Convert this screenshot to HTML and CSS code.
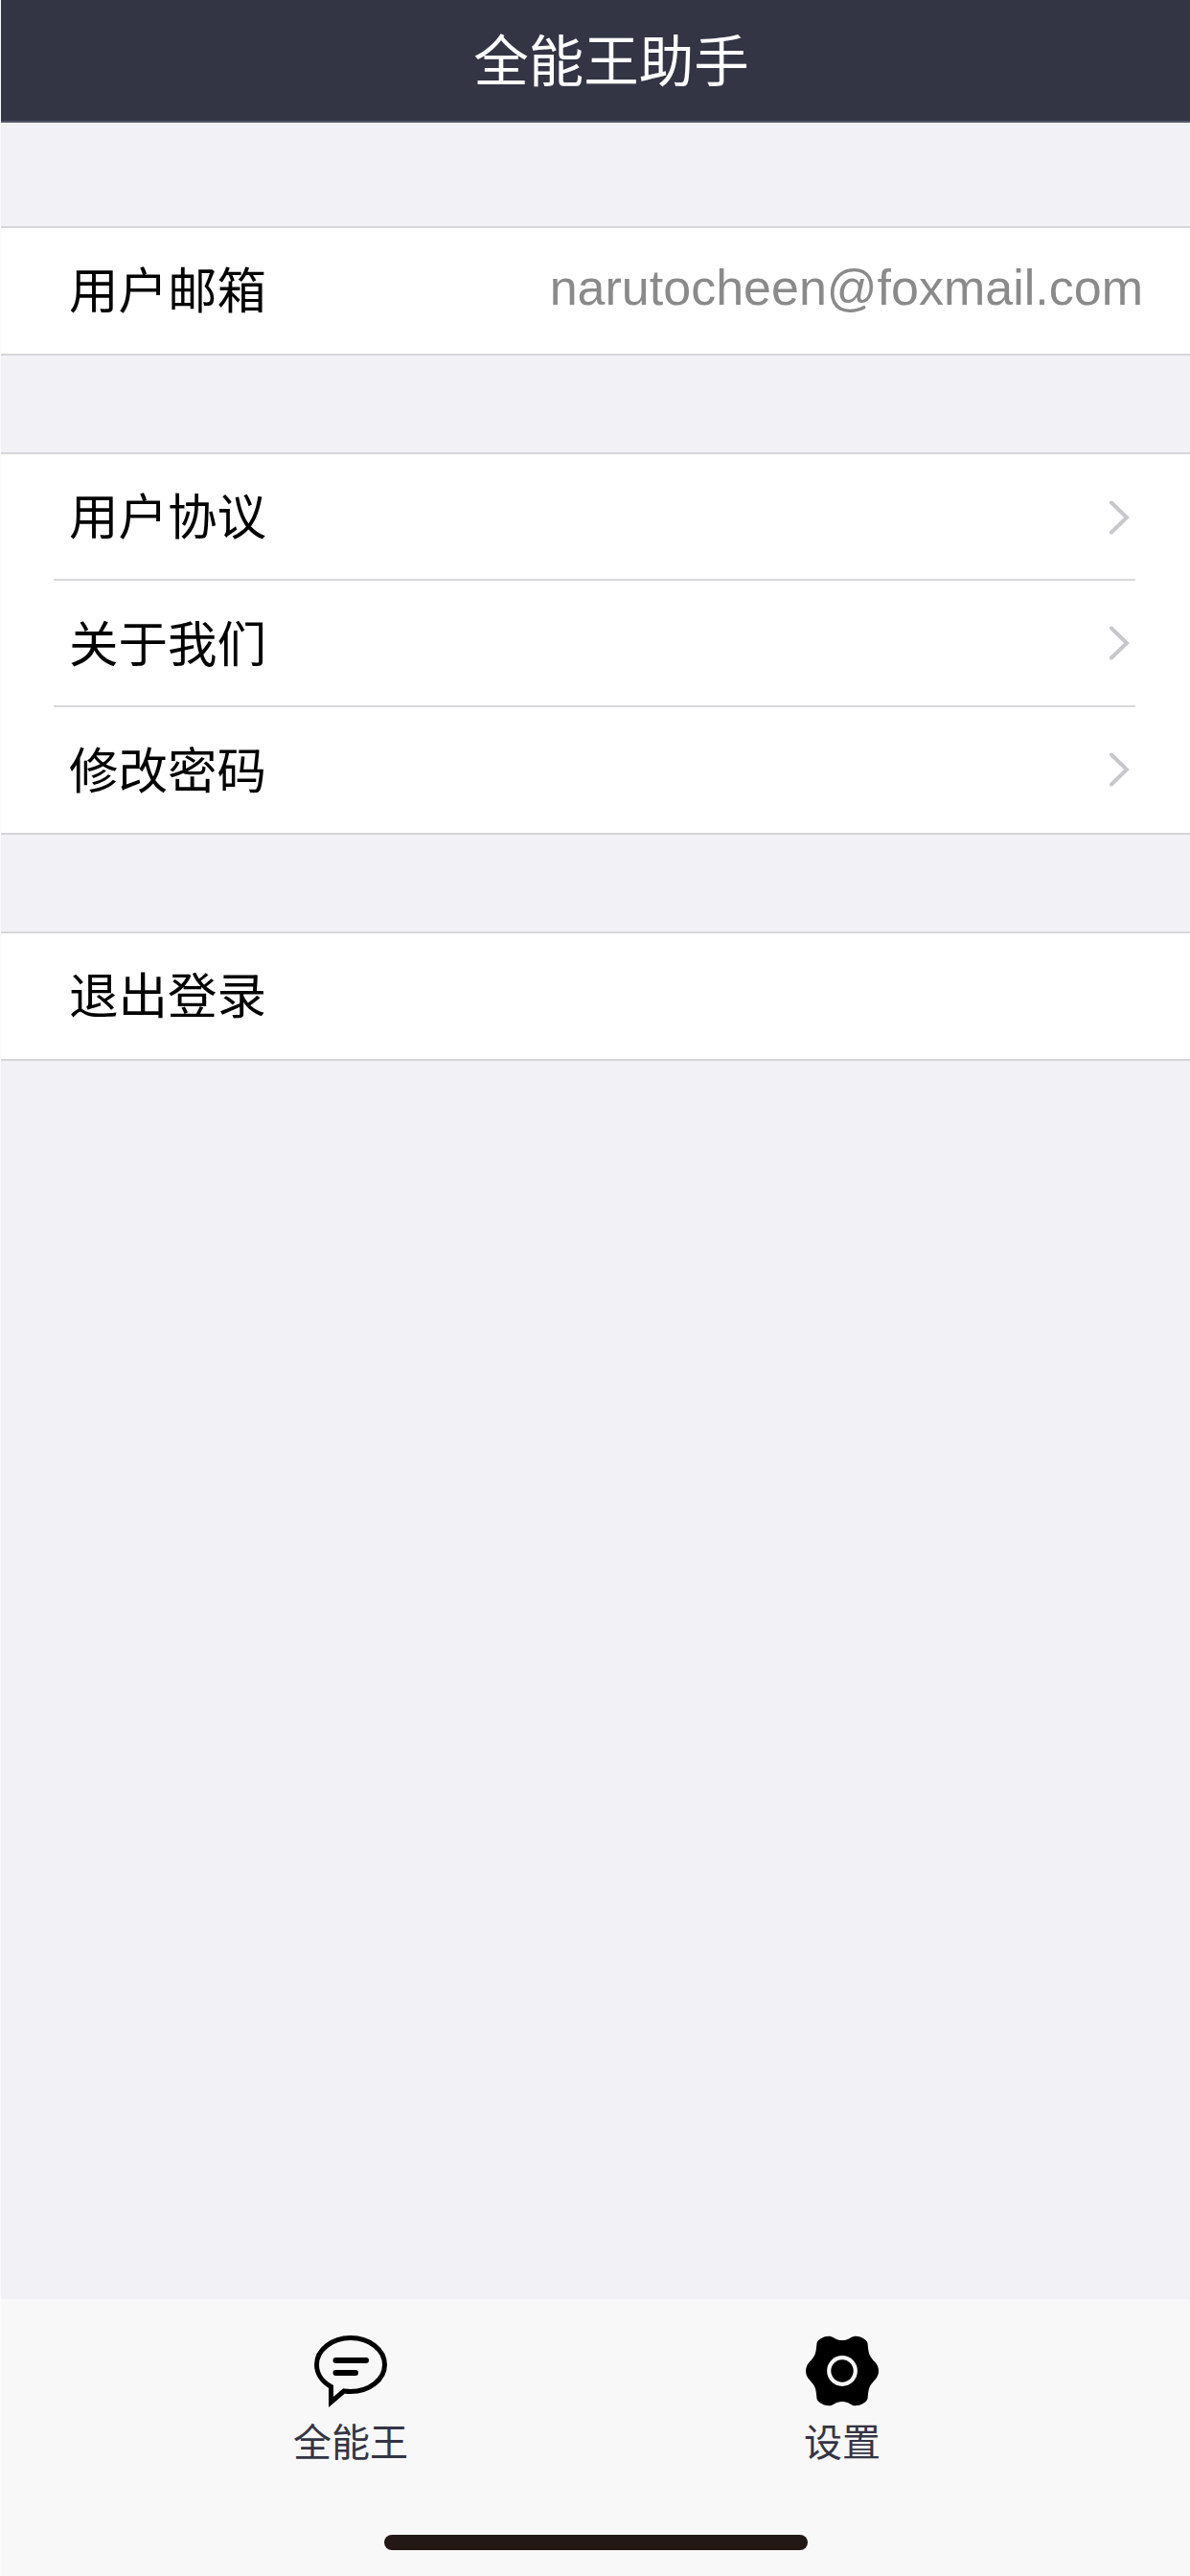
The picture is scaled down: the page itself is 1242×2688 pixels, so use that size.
FILE: index.html
```html
<!DOCTYPE html>
<html lang="zh-CN">
<head>
<meta charset="utf-8">
<title>全能王助手</title>
<link rel="stylesheet" href="styles.css">
</head>
<body>
<div class="app">
  <header class="navbar"><h1 class="navbar-title">全能王助手</h1></header>
  <main class="content">
    <section class="group group-first">
      <div class="row">
        <span class="row-label">用户邮箱</span>
        <span class="row-value">narutocheen@foxmail.com</span>
      </div>
    </section>
    <section class="group group-second">
      <div class="row row-divided">
        <span class="row-label">用户协议</span>
        <svg class="chevron" viewBox="0 0 22 36"><path d="M3 2.5 L19 18 L3 33.5"/></svg>
      </div>
      <div class="row row-divided row-tall">
        <span class="row-label">关于我们</span>
        <svg class="chevron" viewBox="0 0 22 36"><path d="M3 2.5 L19 18 L3 33.5"/></svg>
      </div>
      <div class="row row-tall">
        <span class="row-label">修改密码</span>
        <svg class="chevron" viewBox="0 0 22 36"><path d="M3 2.5 L19 18 L3 33.5"/></svg>
      </div>
    </section>
    <section class="group group-third">
      <div class="row">
        <span class="row-label">退出登录</span>
      </div>
    </section>
  </main>
  <nav class="tabbar">
    <div class="tabs">
      <div class="tab">
        <svg class="tab-icon" viewBox="0 0 76 74">
          <path class="chat-outline" d="M31 58 C33 58.3 35.5 58.5 38 58.5 C57.6 58.5 73.5 46 73.5 30.5 C73.5 15 57.6 2.5 38 2.5 C18.4 2.5 2.5 15 2.5 30.5 C2.5 40 8.5 48.5 17.5 53.5 L17.5 69.5 Z"/>
          <path class="chat-line" d="M22.5 26 H54 M22.5 39 H43"/>
        </svg>
        <span class="tab-label">全能王</span>
      </div>
      <div class="tab">
        <svg class="tab-icon" viewBox="0 0 76 74">
          <path class="gear" d="M38 5 C45 5 48 .3 52 .7 C57 .8 63.5 4 64.5 8 C65 12 65 16 66.5 20 C68 24 72 27 74 30 C75 32 76 34 76 37 C76 40 75 42 74 44 C72 47 68 50 66.5 54 C65 58 65 62 64.5 66 C63.5 70 57 73.2 52 73.3 C48 73.7 45 69 38 69 C31 69 28 73.7 24 73.3 C19 73.2 12.5 70 11.5 66 C11 62 11 58 9.5 54 C8 50 4 47 2 44 C1 42 0 40 0 37 C0 34 1 32 2 30 C4 27 8 24 9.5 20 C11 16 11 12 11.5 8 C12.5 4 19 .8 24 .7 C28 .3 31 5 38 5 Z"/>
          <circle class="gear-ring" cx="38" cy="37" r="13.8"/>
        </svg>
        <span class="tab-label">设置</span>
      </div>
    </div>
    <div class="home-indicator"></div>
  </nav>
</div>
</body>
</html>
```
FILE: styles.css
```css
* { box-sizing: border-box; }
html, body { margin: 0; padding: 0; }
body {
  width: 1242px;
  height: 2688px;
  overflow: hidden;
  background: #fafafa;
  font-family: "Noto Sans CJK SC", "Liberation Sans", sans-serif;
}
.app {
  display: flex;
  flex-direction: column;
  height: 2688px;
  margin-left: 1px;
  background: #f1f1f6;
}
.navbar {
  height: 128px;
  flex: none;
  background: #333544;
  border-bottom: 2px solid #54566a;
  display: flex;
  align-items: center;
  justify-content: center;
  padding: 0 0 6px 33px;
}
.navbar-title {
  margin: 0;
  font-size: 57.5px;
  font-weight: 400;
  line-height: 80px;
  color: #fff;
}
.content { flex: 1; display: flex; flex-direction: column; }
.group {
  background: #fff;
  border-top: 2px solid #d6d6da;
  border-bottom: 2px solid #d6d6da;
}
.group-first { margin-top: 108px; }
.group-second { margin-top: 101px; }
.group-third { margin-top: 101px; }
.row {
  height: 131px;
  display: flex;
  align-items: center;
  justify-content: space-between;
  padding: 0 0 0 71px;
  position: relative;
}
.row-tall { height: 132px; }
.row-divided::after {
  content: "";
  position: absolute;
  left: 55px;
  right: 57px;
  bottom: -1px;
  height: 2px;
  background: #d9d9dc;
}
.row-label {
  font-size: 51.5px;
  line-height: 70px;
  color: #000;
  margin-top: -8px;
}
.row-tall .row-label { margin-top: -5px; }
.row-value {
  font-family: "Liberation Sans", sans-serif;
  font-size: 52px;
  line-height: 70px;
  color: #8a8a8a;
  margin-right: 49px;
  margin-top: -8px;
}
.chevron {
  width: 22px;
  height: 36px;
  margin-right: 63px;
  fill: none;
  stroke: #c7c7cc;
  stroke-width: 4px;
  stroke-linecap: round;
  stroke-linejoin: miter;
}
.tabbar {
  height: 289px;
  flex: none;
  background: #f8f8f9;
  display: flex;
  flex-direction: column;
  align-items: center;
}
.tabs {
  display: flex;
  justify-content: space-between;
  align-self: flex-start;
  width: 613px;
  margin: 38px 0 0 305px;
}
.tab { display: flex; flex-direction: column; align-items: center; gap: 11px; }
.tab-icon { width: 76px; height: 74px; display: block; overflow: visible; }
.chat-outline { fill: none; stroke: #000; stroke-width: 5px; stroke-linejoin: miter; stroke-miterlimit: 8; }
.chat-line { fill: none; stroke: #000; stroke-width: 6px; stroke-linecap: round; }
.gear { fill: #000; }
.gear-ring { fill: none; stroke: #f8f8f9; stroke-width: 4.2px; }
.tab-label {
  font-size: 40px;
  line-height: 48px;
  color: #333544;
}
.home-indicator {
  width: 442px;
  height: 16px;
  border-radius: 8px;
  background: #231815;
  margin: auto 0 27px;
}
```
